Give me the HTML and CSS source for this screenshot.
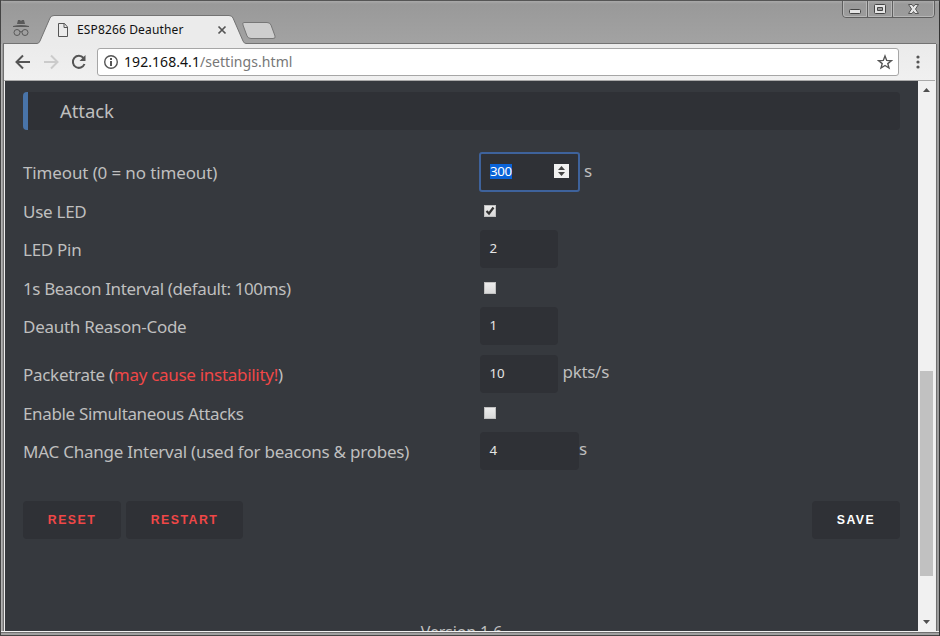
FILE: index.html
```html
<!DOCTYPE html>
<html lang="en">
<head>
<meta charset="utf-8">
<title>ESP8266 Deauther</title>
<link rel="stylesheet" href="styles.css">
</head>
<body>
<div class="window">
  <header class="tabstrip">
    <svg class="chrome-art" width="940" height="44" viewBox="0 0 940 44">
      <g fill="#595959"><path d="M17 24L18 20H20L21 21L22 20H24L25 24Z"/><path d="M13 26Q21 24 29 26V27H13Z"/></g>
      <g fill="none" stroke="#595959"><circle cx="17" cy="32.5" r="3"/><circle cx="25" cy="32.5" r="3"/><path d="M20 32Q21 31 22 32"/></g>
      <path d="M3 43.5H36Q39 43.5 40 41L50 18Q51 15.500 54 15.500H229Q232 15.500 233 18L243 41Q244 43.500 247 43.500H936V44H3Z" fill="#ebebeb"/>
      <path d="M3 43.500H37Q39 43.500 40 41L50 18Q51 15.500 54 15.500H229Q232 15.500 233 18L243 41Q244 43.500 246 43.500H936" fill="none" stroke="#737373"/>
      <path d="M244 22.500H267Q270 22.500 271 25L275 36Q276 38.500 273 38.500H251Q248 38.500 247 36L243 25Q242 22.500 244 22.500Z" fill="#cecece" stroke="#777"/>
      <path d="M58.500 23.500H64.500L67.500 27V36.500H58.500ZM64 23.500V27.500H67.500" fill="none" stroke="#555"/>
      <path d="M218.500 26.500L225.500 33.500M225.500 26.500L218.500 33.500" stroke="#555" stroke-width="1.700"/>
      <path d="M842.500 1V14Q842.500 17.500 846 17.500H931Q934.500 17.500 934.500 14V1M867.500 1V17M892.500 1V17" fill="none" stroke="#5f5f5f"/>
      <path d="M843.500 1V14Q843.500 16.500 846 16.500H866.500V1M868.500 1V16.500H891.500V1M893.500 1V16.500H931Q933.500 16.500 933.500 14V1" fill="none" stroke="#b7b7b7"/>
      <rect x="849.500" y="9.500" width="11" height="4" rx="1" fill="#e5e5e5" stroke="#444"/>
      <path d="M875.500 4.500H884.500Q885.500 4.500 885.500 5.500V12.500Q885.500 13.500 884.500 13.500H875.500Q874.500 13.500 874.500 12.500V5.500Q874.500 4.500 875.500 4.500ZM877.500 7.500V10.500H882.500V7.500Z" fill="#e5e5e5" fill-rule="evenodd" stroke="#444"/>
      <path d="M908.500 4.500H912L913.500 6.500L915 4.500H918.500L915.500 9L918.500 13.500H915L913.500 11.500L912 13.500H908.500L911.500 9Z" fill="#e5e5e5" stroke="#555"/>
    </svg>
    <span class="tab-title">ESP8266 Deauther</span>
  </header>
  <nav class="toolbar">
    <svg class="nav-icons" width="92" height="36" viewBox="0 0 92 36" fill="none" stroke="#555" stroke-width="2">
      <path d="M30 18H17M23 11.500L16.500 18L23 24.500"/>
      <path d="M44 18H57M51 11.500L57.500 18L51 24.500" stroke="#cbcbcb"/>
      <path d="M83.500 14A6 6 0 1 0 84.500 20"/><path d="M85.500 11V17H79.500Z" fill="#555" stroke="none"/>
    </svg>
    <div class="omnibox">
      <svg width="16" height="16" viewBox="0 0 16 16"><circle cx="8" cy="8" r="6.300" fill="none" stroke="#555" stroke-width="1.400"/><path d="M7 4H9V6H7ZM7 7H9V12H7Z" fill="#555"/></svg>
      <span class="url"><span class="host">192.168.4.1</span>/settings.html</span>
      <svg class="star" width="16" height="16" viewBox="0 0 16 16"><path d="M8 2L9.700 6.400L14.300 6.700L10.800 9.600L12 14L8 11.500L4 14L5.200 9.600L1.700 6.700L6.300 6.400Z" fill="none" stroke="#555" stroke-width="1.400"/></svg>
    </div>
    <svg class="menu" width="4" height="14" viewBox="0 0 4 14" fill="#555"><circle cx="2" cy="2" r="1.600"/><circle cx="2" cy="7" r="1.600"/><circle cx="2" cy="12" r="1.600"/></svg>
  </nav>
  <div class="viewport">
    <main class="page">
      <h2 class="section-title">Attack</h2>
      <div class="settings">
        <div class="row"><span class="label l1">Timeout (0 = no timeout)</span><div class="field wide focused"><span class="selected">300</span><svg class="spinner" width="15" height="14" viewBox="0 0 15 14"><path fill="#f1f1f1" d="M0 0H15V14H0Z"/><path fill="#444" d="M4 6L7.500 2L11 6ZM4 8H11L7.500 12Z"/></svg></div><span class="unit gap">s</span></div>
        <div class="row"><span class="label l2">Use LED</span><span class="check"><svg width="12" height="12" viewBox="0 0 12 12"><path d="M2.500 6L5 8.500L9.500 2.500" fill="none" stroke="#333" stroke-width="2.200"/></svg></span></div>
        <div class="row"><span class="label l2">LED Pin</span><div class="field">2</div></div>
        <div class="row"><span class="label l4">1s Beacon Interval (default: 100ms)</span><span class="check"></span></div>
        <div class="row"><span class="label l5">Deauth Reason-Code</span><div class="field">1</div></div>
        <div class="row spaced"><span class="label l6">Packetrate (<span class="danger">may cause instability!</span>)</span><div class="field">10</div><span class="unit gap pkts">pkts/s</span></div>
        <div class="row"><span class="label l7">Enable Simultaneous Attacks</span><span class="check"></span></div>
        <div class="row"><span class="label l8">MAC Change Interval (used for beacons &amp; probes)</span><div class="field wide">4</div><span class="unit">s</span></div>
      </div>
      <div class="actions">
        <div class="button reset danger">RESET</div>
        <div class="button restart danger">RESTART</div>
        <div class="button save">SAVE</div>
      </div>
      <footer class="version">Version 1.6</footer>
    </main>
    <div class="scrollbar">
      <svg width="17" height="17" viewBox="0 0 17 17"><path d="M5 11L8.500 7L12 11Z" fill="#505050"/></svg>
      <div class="thumb"></div>
      <svg class="down" width="17" height="17" viewBox="0 0 17 17"><path d="M5 6L8.500 10L12 6Z" fill="#505050"/></svg>
    </div>
  </div>
</div>
</body>
</html>
```
FILE: styles.css
```css
* { box-sizing: border-box; }
body { margin: 0; overflow: hidden; font-family: "Noto Sans", sans-serif; background: #444; }
.window {
  width: 940px; height: 636px; overflow: hidden;
  background: linear-gradient(90deg, #444 1px, #b2b2b2 1px, #b2b2b2 2px, #9c9c9c 2px, #9c9c9c 3px, #707070 3px, #707070 4px, #eee 4px, #eee 936px, #707070 936px, #707070 937px, #9c9c9c 937px, #9c9c9c 939px, #333 939px);
  display: flex; flex-direction: column; border-radius: 4px 4px 0 0; position: relative;
}
.window::after { content: ""; position: absolute; left: 1px; right: 1px; bottom: 0; height: 5px; background: linear-gradient(#f2f2f2 1px, #707070 1px, #707070 2px, #a0a0a0 2px, #a0a0a0 4px, #444 4px); }
.tabstrip { height: 44px; flex: none; border-top: 1px solid #555; background: linear-gradient(#a9a9a9, #999 3px, #a2a2a2 40px); position: relative; border-left: 1px solid #444; border-right: 1px solid #333; }
.chrome-art { position: absolute; left: -1px; top: -1px; }
.tab-title { position: absolute; left: 76px; top: 20px; font-size: 12px; line-height: 17px; color: #111; white-space: nowrap; letter-spacing: .14px; }
.toolbar { flex: none; height: 37px; margin: 0 5px 0 4px; display: flex; align-items: center; background: linear-gradient(#ebebeb, #f0f0f0); border-bottom: 1px solid #aaa; }
.nav-icons { margin-left: -4px; margin-right: 5px; }
.omnibox { width: 802px; height: 28px; border: 1px solid #a6a6a6; border-radius: 3px; background: #fff; display: flex; align-items: center; padding: 0 5px; }
.url { margin-left: 5px; font-size: 14px; line-height: 20px; color: #777; white-space: nowrap; letter-spacing: .06px; }
.host { color: #111; }
.star { margin-left: auto; }
.menu { margin-left: 16.5px; }
.viewport { height: 550px; flex: none; margin: 0 5px; display: flex; overflow: hidden; }
.page { width: 913px; flex: none; padding: 11px 18px 0; background: #36393e; color: #bfbfbf; }
.section-title { margin: 0; height: 38px; border-left: 5px solid #4974a9; border-radius: 4px; background: #2f3136; padding-left: 32px; font-size: 18.5px; font-weight: 400; line-height: 38px; letter-spacing: -.1px; }
.settings { margin-top: 23px; }
.row { height: 38.5px; display: flex; align-items: center; font-size: 17px; white-space: nowrap; }
.spaced { margin-top: 9px; }
.label { width: 457px; flex: none; line-height: 24px; padding-top: 2px; }
.l1 { letter-spacing: -.13px; }
.l2 { letter-spacing: -.27px; }
.l4 { letter-spacing: -.37px; }
.l5 { letter-spacing: -.27px; }
.l6 { letter-spacing: -.29px; }
.l7 { letter-spacing: -.35px; padding-top: 4px; }
.l8 { letter-spacing: -.24px; }
.danger { color: #f04747; }
.field { width: 78px; height: 38px; flex: none; display: flex; align-items: center; padding: 0 10px 2px 9.5px; border-radius: 4px; background: #2f3136; color: #e5e5e5; font-size: 13.300px; }
.wide { width: 99px; }
.focused { width: 101px; height: 40px; margin-left: -1px; border: 2px solid #3e629b; border-radius: 3px; padding: 0 9px 2px; letter-spacing: -.3px; }
.selected { background: #0a63d8; color: #fff; line-height: 15px; }
.spinner { margin-left: auto; }
.unit { line-height: 24px; margin-top: -3px; }
.gap { margin-left: 4px; }
.pkts { margin-left: 4.5px; letter-spacing: -.3px; }
.check { width: 12px; height: 12px; margin-left: 4px; margin-top: 1px; border-radius: 1px; background: linear-gradient(#eee, #d8d8d8); box-shadow: inset 0 0 0 1px #c0c0c0; display: flex; }
.actions { display: flex; gap: 5px; margin-top: 31px; }
.button { height: 38px; background: #2f3136; border-radius: 4px; text-align: center; font: bold 12.3px/38px "Liberation Sans", sans-serif; letter-spacing: 1.5px; }
.reset { width: 98px; }
.restart { width: 117px; }
.save { width: 88px; margin-left: auto; color: #fff; }
.version { margin-top: 81px; text-align: center; font-size: 16px; line-height: 24px; letter-spacing: -.15px; }
.scrollbar { width: 17px; background: #f1f1f1; display: flex; flex-direction: column; }
.thumb { width: 13px; height: 205px; margin: 273px 0 0 2px; background: #c1c1c1; flex: none; }
.down { margin-top: auto; }
```
